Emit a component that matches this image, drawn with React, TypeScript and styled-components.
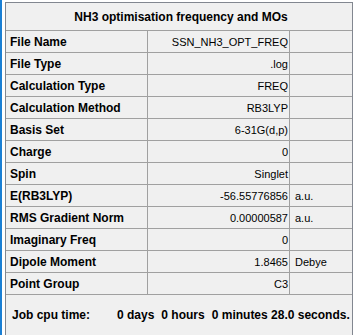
import React from "react";
import styled, { createGlobalStyle } from "styled-components";

const Global = createGlobalStyle`
  html, body { margin: 0; padding: 0; background: #ffffff; }
  body { font-family: "Liberation Sans", Arial, sans-serif; color: #000; }
`;

const Page = styled.div`
  display: flex;
  width: 356px;
  height: 335px;
  overflow: hidden;
  background: #ffffff;
`;

const AccentEdge = styled.div`
  width: 2px;
  flex: none;
  background: #1a7fd4;
`;

const Panel = styled.div`
  margin: 2px 0 0 3px;
  width: 348px;
  flex: none;
  box-sizing: border-box;
  border: 1px solid #828790;
  border-bottom: none;
  background: #f0f0f0;
  display: flex;
  flex-direction: column;
`;

const Table = styled.div`
  display: grid;
  grid-template-columns: 142px 142px 62px;
  grid-template-rows: 28px;
  grid-auto-rows: 22px;
`;

const Title = styled.div`
  grid-column: 1 / span 3;
  box-sizing: border-box;
  border-bottom: 1px solid #a0a0a0;
  display: flex;
  align-items: center;
  justify-content: center;
  font-size: 12px;
  font-weight: bold;
  padding-left: 4px;
`;

const Cell = styled.div<{ $kind: "label" | "value" | "unit" }>`
  box-sizing: border-box;
  border-bottom: 1px solid #a0a0a0;
  border-right: ${(p) => (p.$kind === "unit" ? "none" : "1px solid #a0a0a0")};
  display: flex;
  align-items: center;
  white-space: nowrap;
  overflow: hidden;
  font-size: ${(p) => (p.$kind === "label" ? "12px" : "11px")};
  font-weight: ${(p) => (p.$kind === "label" ? "bold" : "normal")};
  justify-content: ${(p) => (p.$kind === "value" ? "flex-end" : "flex-start")};
  padding: ${(p) =>
    p.$kind === "label" ? "0 0 0 4px" : p.$kind === "value" ? "0 1px 0 0" : "0 0 0 5px"};
`;

const Footer = styled.div`
  display: flex;
  align-items: center;
  padding: 13px 0 0 6px;
  font-size: 12px;
  line-height: 14px;
  font-weight: bold;
  white-space: nowrap;
`;

const FooterLabel = styled.span`
  width: 105px;
  flex: none;
`;

const FooterParts = styled.div`
  display: flex;
  gap: 7px;
`;

const rows: [string, string, string][] = [
  ["File Name", "SSN_NH3_OPT_FREQ", ""],
  ["File Type", ".log", ""],
  ["Calculation Type", "FREQ", ""],
  ["Calculation Method", "RB3LYP", ""],
  ["Basis Set", "6-31G(d,p)", ""],
  ["Charge", "0", ""],
  ["Spin", "Singlet", ""],
  ["E(RB3LYP)", "-56.55776856", "a.u."],
  ["RMS Gradient Norm", "0.00000587", "a.u."],
  ["Imaginary Freq", "0", ""],
  ["Dipole Moment", "1.8465", "Debye"],
  ["Point Group", "C3", ""],
];

export default function App() {
  return (
    <>
      <Global />
      <Page>
        <AccentEdge />
        <Panel>
          <Table>
            <Title>NH3 optimisation frequency and MOs</Title>
            {rows.map(([label, value, unit]) => (
              <React.Fragment key={label}>
                <Cell $kind="label">{label}</Cell>
                <Cell $kind="value">{value}</Cell>
                <Cell $kind="unit">{unit}</Cell>
              </React.Fragment>
            ))}
          </Table>
          <Footer>
            <FooterLabel>Job cpu time:</FooterLabel>
            <FooterParts>
              <span>0 days</span>
              <span>0 hours</span>
              <span>0 minutes 28.0 seconds.</span>
            </FooterParts>
          </Footer>
        </Panel>
      </Page>
    </>
  );
}
